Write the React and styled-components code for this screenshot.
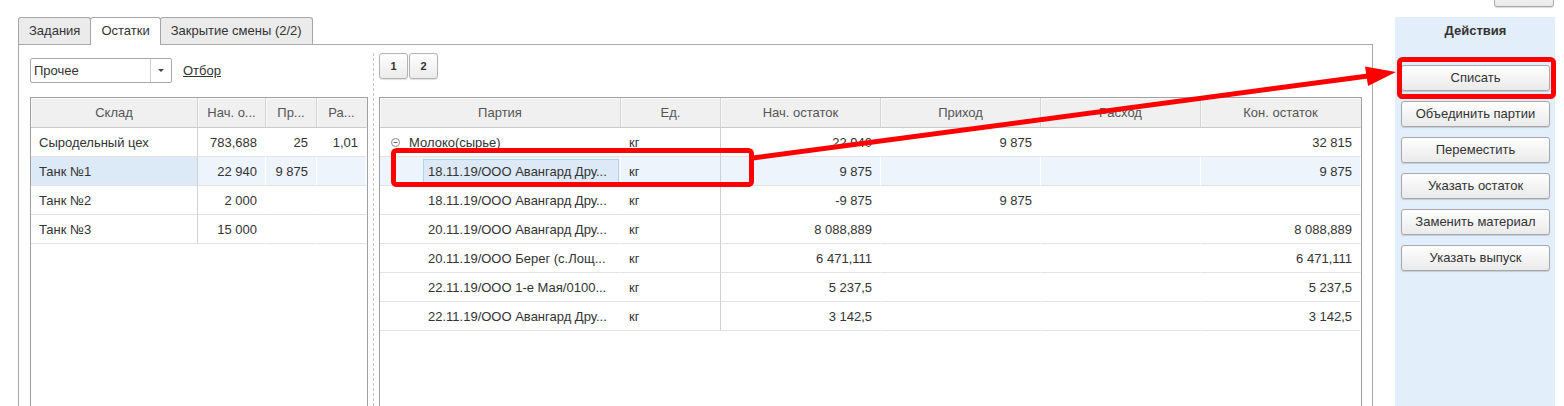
import React from 'react';
import styled, { createGlobalStyle } from 'styled-components';

const GlobalStyle = createGlobalStyle`
  html, body {
    margin: 0;
    padding: 0;
    background: #ffffff;
  }
  body {
    font-family: "Liberation Sans", Arial, sans-serif;
    font-size: 13px;
    color: #333333;
    overflow: hidden;
  }
`;

const Page = styled.div`
  position: relative;
  display: flex;
  gap: 22px;
  height: 406px;
  padding: 0 9px 0 18px;
  box-sizing: border-box;
  overflow: hidden;
`;

const Main = styled.div`
  flex: 0 0 1355px;
  display: flex;
  flex-direction: column;
  padding-top: 17px;
  box-sizing: border-box;
`;

const TabBar = styled.div`
  position: relative;
  z-index: 1;
  display: flex;
  height: 27px;
`;

const Tab = styled.div`
  position: relative;
  height: ${({ $active }) => ($active ? 28 : 27)}px;
  box-sizing: border-box;
  padding: 0 10px;
  line-height: 26px;
  border: 1px solid #a6a6a6;
  border-bottom: none;
  border-radius: 3px 3px 0 0;
  background: ${({ $active }) => ($active ? '#ffffff' : '#ebebeb')};
  color: #333333;
  white-space: nowrap;
  & + & {
    margin-left: -1px;
  }
`;

const Panel = styled.div`
  flex: 1;
  display: flex;
  min-height: 0;
  border: 1px solid #a9a9a9;
  border-bottom: none;
  padding: 8px 10px 0 11px;
`;

const LeftPane = styled.div`
  flex: 0 0 338px;
  display: flex;
  flex-direction: column;
`;

const RightPane = styled.div`
  flex: 0 0 983px;
  display: flex;
  flex-direction: column;
`;

const Splitter = styled.div`
  flex: 0 0 11px;
  &::before {
    content: '';
    display: block;
    height: 100%;
    margin-left: 5px;
    border-left: 1px dashed #c6c6c6;
  }
`;

const FilterRow = styled.div`
  display: flex;
  align-items: center;
  gap: 11px;
  height: 25px;
  margin-top: 5px;
`;

const Select = styled.div`
  display: flex;
  width: 142px;
  height: 25px;
  box-sizing: border-box;
  border: 1px solid #a9a9a9;
  border-radius: 2px;
  background: #ffffff;
`;

const SelectValue = styled.div`
  flex: 1;
  padding-left: 3px;
  line-height: 23px;
`;

const SelectButton = styled.div`
  width: 20px;
  border-left: 1px solid #d0d0d0;
  display: flex;
  align-items: center;
  justify-content: center;
  &::after {
    content: '';
    border-left: 3px solid transparent;
    border-right: 3px solid transparent;
    border-top: 3px solid #444444;
  }
`;

const FilterLink = styled.a`
  color: #333333;
  text-decoration: underline;
  cursor: pointer;
`;

const PageButtons = styled.div`
  display: flex;
  gap: 1px;
  height: 26px;
`;

const SmallButton = styled.div`
  width: 29px;
  height: 26px;
  box-sizing: border-box;
  border: 1px solid #b3b3b3;
  border-radius: 3px;
  background: linear-gradient(#ffffff, #ebebeb);
  box-shadow: 0 1px 1px rgba(0, 0, 0, 0.12);
  font-size: 11px;
  font-weight: bold;
  line-height: 24px;
  text-align: center;
  color: #333333;
`;

const GridBox = styled.div`
  flex: 1;
  margin-top: ${({ $offset }) => $offset}px;
  border: 1px solid #a0a0a0;
  border-bottom: none;
  background: #ffffff;
  overflow: hidden;
`;

const Table = styled.table`
  width: 100%;
  table-layout: fixed;
  border-collapse: separate;
  border-spacing: 0;
`;

const Th = styled.th`
  height: 30px;
  box-sizing: border-box;
  padding: 0 6px;
  background: #f0f0f0;
  border-bottom: 1px solid #c9c9c9;
  border-right: 1px solid ${({ $last }) => ($last ? 'transparent' : '#d4d4d4')};
  box-shadow: inset 1px 1px 0 #fafafa;
  font-weight: normal;
  color: #555555;
  text-align: center;
  white-space: nowrap;
  overflow: hidden;
`;

const Td = styled.td`
  height: 29px;
  box-sizing: border-box;
  padding: 0 8px;
  border-bottom: 1px solid #e3e3e3;
  border-right: 1px solid
    ${({ $divider, $selected }) => ($divider ? '#d0d0d0' : $selected ? '#ffffff' : 'transparent')};
  background: ${({ $selected, $current }) =>
    $current ? '#dce9f7' : $selected ? '#edf4fc' : 'transparent'};
  text-align: ${({ $num }) => ($num ? 'right' : 'left')};
  white-space: nowrap;
  overflow: hidden;
`;

const PartyTd = styled(Td)`
  padding-left: ${({ $level }) => ($level ? 43 : 11)}px;
  padding-right: 1px;
`;

const TreeLabel = styled.div`
  display: flex;
  align-items: center;
  gap: 9px;
`;

const ItemLabel = styled.div`
  height: 25px;
  box-sizing: border-box;
  padding: 0 4px;
  line-height: 23px;
  border: 1px solid ${({ $focused }) => ($focused ? '#b2d2ef' : 'transparent')};
  background: ${({ $focused }) => ($focused ? '#dde9f7' : 'transparent')};
  white-space: nowrap;
  overflow: hidden;
`;

const Side = styled.div`
  flex: 0 0 160px;
  display: flex;
  flex-direction: column;
`;

const TopTools = styled.div`
  height: 17px;
  display: flex;
  justify-content: flex-end;
  align-items: flex-end;
`;

const CutButton = styled.div`
  flex: 0 0 auto;
  width: 60px;
  height: 26px;
  margin: 0 1px 10px 0;
  box-sizing: border-box;
  border: 1px solid #a8a8a8;
  border-radius: 3px;
  background: linear-gradient(#ffffff, #eaeaea);
  box-shadow: 0 1px 1px rgba(0, 0, 0, 0.15);
`;

const ActionsPanel = styled.div`
  flex: 1;
  display: flex;
  flex-direction: column;
  padding: 0 5px 0 6px;
  background: #e2eefa;
`;

const ActionsTitle = styled.div`
  height: 28px;
  line-height: 28px;
  text-align: center;
  font-weight: bold;
  color: #333333;
`;

const ActionList = styled.div`
  display: flex;
  flex-direction: column;
  gap: 10px;
  margin-top: 20px;
`;

const ActionButton = styled.div`
  height: 26px;
  box-sizing: border-box;
  border: 1px solid #a8a8a8;
  border-radius: 3px;
  background: linear-gradient(#ffffff, #eaeaea);
  box-shadow: 0 1px 1px rgba(0, 0, 0, 0.15);
  line-height: 24px;
  text-align: center;
  color: #333333;
`;

const Overlay = styled.svg`
  position: absolute;
  left: 0;
  top: 0;
  pointer-events: none;
`;

const ExpandIcon = () => (
  <svg width='9' height='9' viewBox='0 0 9 9'>
    <circle cx='4.5' cy='4.5' r='4' fill='none' stroke='#8a8a8a' />
    <path d='M2.5 4.5h4' stroke='#6a6a6a' />
  </svg>
);

const stores = [
  ['Сыродельный цех', '783,688', '25', '1,01'],
  ['Танк №1', '22 940', '9 875', ''],
  ['Танк №2', '2 000', '', ''],
  ['Танк №3', '15 000', '', ''],
];

const parties = [
  ['18.11.19/ООО Авангард Дру...', '9 875', '', '', '9 875'],
  ['18.11.19/ООО Авангард Дру...', '-9 875', '9 875', '', ''],
  ['20.11.19/ООО Авангард Дру...', '8 088,889', '', '', '8 088,889'],
  ['20.11.19/ООО Берег (с.Лощ...', '6 471,111', '', '', '6 471,111'],
  ['22.11.19/ООО 1-е Мая/0100...', '5 237,5', '', '', '5 237,5'],
  ['22.11.19/ООО Авангард Дру...', '3 142,5', '', '', '3 142,5'],
];

const actions = [
  'Списать',
  'Объединить партии',
  'Переместить',
  'Указать остаток',
  'Заменить материал',
  'Указать выпуск',
];

const StoresTable = () => (
  <Table>
    <colgroup>
      <col style={{ width: 167 }} />
      <col style={{ width: 68 }} />
      <col style={{ width: 51 }} />
      <col />
    </colgroup>
    <thead>
      <tr>
        <Th>Склад</Th>
        <Th>Нач. о...</Th>
        <Th>Пр...</Th>
        <Th $last>Ра...</Th>
      </tr>
    </thead>
    <tbody>
      {stores.map((row, i) => {
        const sel = i === 1;
        return (
          <tr key={row[0]}>
            <Td $divider $current={sel}>{row[0]}</Td>
            <Td $num $selected={sel}>{row[1]}</Td>
            <Td $num $selected={sel}>{row[2]}</Td>
            <Td $num $selected={sel}>{row[3]}</Td>
          </tr>
        );
      })}
    </tbody>
  </Table>
);

const PartiesTable = () => (
  <Table>
    <colgroup>
      <col style={{ width: 241 }} />
      <col style={{ width: 100 }} />
      <col style={{ width: 160 }} />
      <col style={{ width: 160 }} />
      <col style={{ width: 160 }} />
      <col />
    </colgroup>
    <thead>
      <tr>
        <Th>Партия</Th>
        <Th>Ед.</Th>
        <Th>Нач. остаток</Th>
        <Th>Приход</Th>
        <Th>Расход</Th>
        <Th $last>Кон. остаток</Th>
      </tr>
    </thead>
    <tbody>
      <tr>
        <PartyTd>
          <TreeLabel>
            <ExpandIcon />
            Молоко(сырье)
          </TreeLabel>
        </PartyTd>
        <Td $divider>кг</Td>
        <Td $num>22 940</Td>
        <Td $num>9 875</Td>
        <Td $num></Td>
        <Td $num>32 815</Td>
      </tr>
      {parties.map((row, i) => {
        const sel = i === 0;
        return (
          <tr key={i}>
            <PartyTd $level={1} $selected={sel}>
              <ItemLabel $focused={sel}>{row[0]}</ItemLabel>
            </PartyTd>
            <Td $divider $selected={sel}>кг</Td>
            <Td $num $selected={sel}>{row[1]}</Td>
            <Td $num $selected={sel}>{row[2]}</Td>
            <Td $num $selected={sel}>{row[3]}</Td>
            <Td $num $selected={sel}>{row[4]}</Td>
          </tr>
        );
      })}
    </tbody>
  </Table>
);

const Annotations = () => (
  <Overlay width='1564' height='406' viewBox='0 0 1564 406'>
    <rect x='393.5' y='150.5' width='358' height='34' rx='3' fill='none' stroke='#ff0000' strokeWidth='5' />
    <rect x='1399.5' y='59.5' width='154' height='37' rx='3' fill='none' stroke='#ff0000' strokeWidth='5' />
    <line x1='753' y1='158' x2='1368' y2='76' stroke='#ff0000' strokeWidth='5' />
    <polygon points='1396,72 1365,66.5 1368,86' fill='#ff0000' />
  </Overlay>
);

const App = () => (
  <>
    <GlobalStyle />
    <Page>
      <Main>
        <TabBar>
          <Tab>Задания</Tab>
          <Tab $active>Остатки</Tab>
          <Tab>Закрытие смены (2/2)</Tab>
        </TabBar>
        <Panel>
          <LeftPane>
            <FilterRow>
              <Select>
                <SelectValue>Прочее</SelectValue>
                <SelectButton />
              </Select>
              <FilterLink>Отбор</FilterLink>
            </FilterRow>
            <GridBox $offset={14}>
              <StoresTable />
            </GridBox>
          </LeftPane>
          <Splitter />
          <RightPane>
            <PageButtons>
              <SmallButton>1</SmallButton>
              <SmallButton>2</SmallButton>
            </PageButtons>
            <GridBox $offset={18}>
              <PartiesTable />
            </GridBox>
          </RightPane>
        </Panel>
      </Main>
      <Side>
        <TopTools>
          <CutButton />
        </TopTools>
        <ActionsPanel>
          <ActionsTitle>Действия</ActionsTitle>
          <ActionList>
            {actions.map((a) => (
              <ActionButton key={a}>{a}</ActionButton>
            ))}
          </ActionList>
        </ActionsPanel>
      </Side>
      <Annotations />
    </Page>
  </>
);

export default App;
